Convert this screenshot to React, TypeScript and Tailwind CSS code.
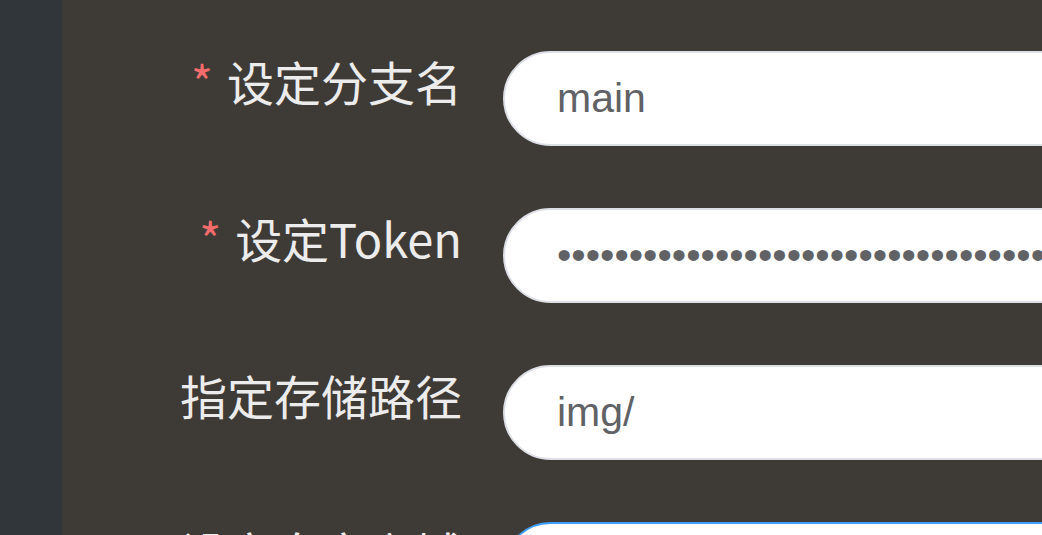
import React from "react";

type Row = {
  label: string;
  required?: boolean;
  value: string;
  type?: string;
  focused?: boolean;
};

const ROWS: Row[] = [
  { label: "设定分支名", required: true, value: "main" },
  { label: "设定Token", required: true, value: "ghp_x8Kq2LmZr7VtYp4NcW0sDfHjA1bE9uGiOk3T", type: "password" },
  { label: "指定存储路径", value: "img/" },
  { label: "设定自定义域名", value: "", focused: true },
];

function FormRow({ row }: { row: Row }) {
  return (
    <div className="flex items-start">
      <label className="w-[400px] shrink-0 pt-[6px] pl-[110px] text-right text-[47px] leading-[47px] text-[#ececec] [font-family:'Noto_Sans_CJK_SC','Noto_Sans',sans-serif]">
        {row.required && <span className="mr-[14px] text-[#f56c6c]">*</span>}
        {row.label}
      </label>
      <input
        type={row.type ?? "text"}
        defaultValue={row.value}
        readOnly
        className={
          "ml-[41px] h-[95px] w-[720px] shrink-0 rounded-full border-2 bg-white pl-[52px] text-[41px] text-[#606266] outline-none [font-family:'Liberation_Sans',Arial,sans-serif] " +
          (row.focused ? "border-[#409eff]" : "border-[#dcdfe6]")
        }
      />
    </div>
  );
}

export default function App() {
  return (
    <div className="flex h-screen w-full overflow-hidden">
      {/* Sidebar */}
      <aside className="w-[62px] shrink-0 bg-[#31363b]" />

      {/* Settings form */}
      <main className="flex-1 overflow-hidden bg-[#3e3a35] pt-[51px]">
        <div className="flex flex-col gap-[62px]">
          {ROWS.map((r) => (
            <FormRow key={r.label} row={r} />
          ))}
        </div>
      </main>
    </div>
  );
}
